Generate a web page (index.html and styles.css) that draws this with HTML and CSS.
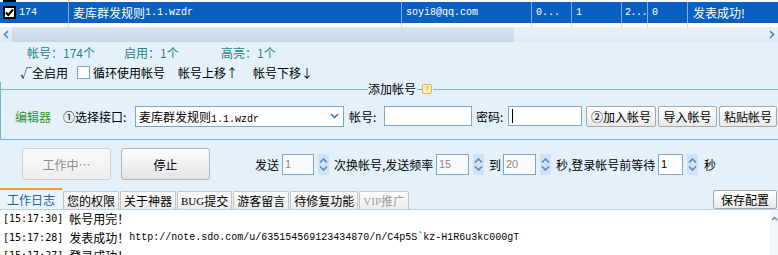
FILE: index.html
```html
<!DOCTYPE html>
<html lang="zh-CN">
<head>
    <meta charset="UTF-8">
    <meta name="viewport" content="width=device-width, initial-scale=1.0">
    <title>麦库群发</title>
    <link rel="stylesheet" href="styles.css">
</head>
<body>
    <div class="grid">
        <div class="grid-rows">
            <div class="row row-cut">
                <div class="cell c1"><span class="cut-mark"></span></div>
                <div class="cell c2"></div>
            </div>
            <div class="row selected">
                <div class="cell c1">
                    <svg class="grid-check" width="13" height="13" viewBox="0 0 13 13"><rect x="1" y="1" width="11" height="11" fill="#fff" stroke="#000" stroke-width="2"/><path d="M3 6.5l2.3 2.5 4.7-5.5" fill="none" stroke="#000" stroke-width="2"/></svg>
                    <span class="mono">174</span>
                </div>
                <div class="cell c2">麦库群发规则<span class="mono">1.1.wzdr</span></div>
                <div class="cell c3"><span class="mono">soyi8@qq.com</span></div>
                <div class="cell c4"><span class="mono">0...</span></div>
                <div class="cell c5"><span class="mono">1</span></div>
                <div class="cell c6"><span class="mono tight">2...</span></div>
                <div class="cell c7"><span class="mono">0</span></div>
                <div class="cell c8">发表成功!</div>
            </div>
            <div class="row">
                <div class="cell c1"></div>
                <div class="cell c2"></div>
                <div class="cell c3"></div>
                <div class="cell c4"></div>
                <div class="cell c5"></div>
                <div class="cell c6"></div>
                <div class="cell c7"></div>
                <div class="cell c8"></div>
            </div>
        </div>
        <div class="hscroll">
            <span class="hs-arrow"><svg width="6" height="9" viewBox="0 0 6 9"><path d="M5 1L1.5 4.5L5 8" stroke="#4a86c8" stroke-width="1.6" fill="none"/></svg></span>
            <div class="track"><div class="thumb"></div></div>
            <span class="hs-arrow"><svg width="6" height="9" viewBox="0 0 6 9"><path d="M1 1l3.5 3.5L1 8" stroke="#4a86c8" stroke-width="1.6" fill="none"/></svg></span>
        </div>
    </div>

    <div class="stats">
        <span>帐号：174个</span>
        <span>启用：1个</span>
        <span>高亮：1个</span>
    </div>

    <div class="options">
        <span class="check-all">√全启用</span>
        <span class="box"></span>
        <span>循环使用帐号</span>
        <span class="move-up">帐号上移↑</span>
        <span>帐号下移↓</span>
    </div>

    <div class="addbox">
        <div class="addbox-head">
            <span class="head-line left"></span>
            <span class="head-title">添加帐号</span>
            <span class="head-line dash"></span>
            <span class="help-icon">?</span>
            <span class="head-line right"></span>
        </div>
        <div class="addbox-body">
            <span class="editor">编辑器</span>
            <span class="lbl-api">①选择接口:</span>
            <div class="select">
                <span>麦库群发规则<span class="mono">1.1.wzdr</span></span>
                <svg width="9" height="6" viewBox="0 0 9 6"><path d="M1 1l3.5 3.5L8 1" stroke="#3a78c0" stroke-width="1.6" fill="none"/></svg>
            </div>
            <span class="lbl-acc">帐号:</span>
            <div class="input in-acc"></div>
            <span class="lbl-pwd">密码:</span>
            <div class="input in-pwd"><span class="caret"></span></div>
            <button class="btn-sm b-add">②加入帐号</button>
            <button class="btn-sm b-imp">导入帐号</button>
            <button class="btn-sm b-paste">粘贴帐号</button>
        </div>
    </div>

    <div class="runbar">
        <button class="btn-big disabled">工作中…</button>
        <button class="btn-big stop">停止</button>
        <span class="lbl-send">发送</span>
        <div class="num w32">1</div>
        <svg class="spin" width="11" height="21" viewBox="0 0 11 21"><rect width="11" height="21" fill="#d2e2f1"/><path d="M2 8.5l3.5-3.5L9 8.5" stroke="#4a86c8" stroke-width="1.5" fill="none"/><path d="M2 12.5l3.5 3.5L9 12.5" stroke="#4a86c8" stroke-width="1.5" fill="none"/></svg>
        <span class="lbl-long">次换帐号,发送频率</span>
        <div class="num w33">15</div>
        <svg class="spin" width="11" height="21" viewBox="0 0 11 21"><rect width="11" height="21" fill="#d2e2f1"/><path d="M2 8.5l3.5-3.5L9 8.5" stroke="#4a86c8" stroke-width="1.5" fill="none"/><path d="M2 12.5l3.5 3.5L9 12.5" stroke="#4a86c8" stroke-width="1.5" fill="none"/></svg>
        <span class="lbl-to">到</span>
        <div class="num w33">20</div>
        <svg class="spin" width="11" height="21" viewBox="0 0 11 21"><rect width="11" height="21" fill="#d2e2f1"/><path d="M2 8.5l3.5-3.5L9 8.5" stroke="#4a86c8" stroke-width="1.5" fill="none"/><path d="M2 12.5l3.5 3.5L9 12.5" stroke="#4a86c8" stroke-width="1.5" fill="none"/></svg>
        <span class="lbl-long">秒,登录帐号前等待</span>
        <div class="num w25 active">1</div>
        <svg class="spin" width="11" height="21" viewBox="0 0 11 21"><rect width="11" height="21" fill="#d2e2f1"/><path d="M2 8.5l3.5-3.5L9 8.5" stroke="#4a86c8" stroke-width="1.5" fill="none"/><path d="M2 12.5l3.5 3.5L9 12.5" stroke="#4a86c8" stroke-width="1.5" fill="none"/></svg>
        <span class="lbl-sec">秒</span>
    </div>

    <div class="tabbar">
        <span class="tab active">工作日志</span>
        <span class="tab">您的权限</span>
        <span class="tab">关于神器</span>
        <span class="tab"><span class="serif">BUG</span>提交</span>
        <span class="tab">游客留言</span>
        <span class="tab">待修复功能</span>
        <span class="tab vip"><span class="serif">VIP</span>推广</span>
        <button class="btn-sm save">保存配置</button>
    </div>

    <div class="log">
        <div class="log-lines">
            <div class="log-line"><span class="ts">[15:17:30] </span>帐号用完！</div>
            <div class="log-line"><span class="ts">[15:17:28] </span>发表成功！<span class="mono">http://note.sdo.com/u/635154569123434870/n/C4p5S`kz-H1R6u3kc000gT</span></div>
            <div class="log-line"><span class="ts">[15:17:27] </span>登录成功！</div>
        </div>
        <div class="vscroll">
            <svg width="7" height="5" viewBox="0 0 7 5"><path d="M1 4l2.5-2.5L6 4" stroke="#4a86c8" stroke-width="1.3" fill="none"/></svg>
        </div>
    </div>
</body>
</html>
```

FILE: styles.css
```css
* {
    box-sizing: border-box;
}
body {
    margin: 0;
    width: 778px;
    height: 255px;
    overflow: hidden;
    background-color: #e4f1fb;
    font-family: "Noto Sans CJK SC", sans-serif;
    font-size: 12px;
    color: #000;
}
button {
    font-family: inherit;
    font-size: 12px;
    color: #000;
    padding: 0;
}
.mono {
    font-family: "Liberation Mono", monospace;
    font-size: 10px;
}
.mono.tight {
    letter-spacing: -0.5px;
}
.serif {
    font-family: "Liberation Serif", serif;
    font-size: 11px;
}

/* account grid */
.grid {
    height: 42px;
    background-color: #fff;
}
.grid-rows {
    height: 27px;
    overflow: hidden;
}
.row {
    display: flex;
    height: 21px;
}
.row-cut {
    height: 2px;
}
.cut-mark {
    width: 13px;
    height: 2px;
    background-color: #000;
    align-self: flex-start;
}
.cell {
    display: flex;
    align-items: center;
    height: 100%;
    padding-left: 4px;
    border-right: 1px solid #d6d6d6;
    white-space: nowrap;
    overflow: hidden;
}
.selected {
    background-color: #0a5fc2;
    color: #fff;
}
.selected .cell {
    border-right-color: #86acdc;
}
.c1 { width: 69px; padding-left: 3px; }
.c2 { width: 333px; }
.c3 { width: 130px; }
.c4 { width: 40px; }
.c5 { width: 50px; }
.c6 { width: 26px; padding-left: 3px; }
.c7 { width: 40px; }
.c8 { flex: 1; border-right: none; padding-left: 5px; }
.grid-check {
    margin-right: 3px;
}
.hscroll {
    display: flex;
    align-items: center;
    height: 15px;
    background: linear-gradient(#eaf3fa, #dce9f4);
}
.hs-arrow {
    width: 12px;
    display: flex;
    justify-content: center;
}
.track {
    flex: 1;
    height: 100%;
}
.thumb {
    width: 502px;
    height: 100%;
    background: linear-gradient(#d6e5f1, #c4d7e7);
}

/* counters and options */
.stats {
    display: flex;
    height: 14px;
    line-height: 14px;
    margin-top: 4px;
    padding-left: 27px;
    color: #1f8585;
}
.stats span {
    width: 97px;
}
.options {
    display: flex;
    align-items: center;
    height: 16px;
    margin-top: 4px;
    padding-left: 20px;
}
.check-all {
    width: 57px;
}
.box {
    width: 13px;
    height: 13px;
    border: 1px solid #7aa7cf;
    background-color: #fff;
    margin-right: 3px;
}
.move-up {
    margin-left: 13px;
    width: 75px;
}

/* add account box */
.addbox {
    margin-top: 9px;
    border-left: 1px solid #78b5d3;
    border-bottom: 1px solid #78b5d3;
}
.addbox-head {
    display: flex;
    align-items: center;
    height: 14px;
    margin-top: -7px;
}
.head-line {
    height: 1px;
    background-color: #78b5d3;
}
.head-line.left {
    width: 367px;
}
.head-line.dash {
    width: 5px;
    margin-left: 1px;
}
.head-line.right {
    flex: 1;
    margin-left: 1px;
}
.head-title {
    line-height: 14px;
}
.help-icon {
    width: 10px;
    height: 10px;
    border: 1px solid #e0b050;
    border-radius: 2px;
    background-color: #fff3bd;
    color: #d08a20;
    font-family: "Liberation Sans", sans-serif;
    font-size: 8px;
    line-height: 8px;
    text-align: center;
}
.addbox-body {
    display: flex;
    align-items: center;
    height: 22px;
    margin: 9px 0 12px 14px;
}
.editor {
    width: 48px;
    color: #2a962a;
}
.lbl-api {
    width: 72px;
}
.select {
    display: flex;
    align-items: center;
    justify-content: space-between;
    width: 209px;
    height: 21px;
    padding: 0 4px 0 3px;
    border: 1px solid #7ea6c9;
    background-color: #fff;
}
.lbl-acc {
    width: 40px;
    padding-left: 5px;
}
.input {
    height: 20px;
    border: 1px solid #7ea6c9;
    background-color: #fff;
}
.in-acc {
    width: 88px;
}
.lbl-pwd {
    width: 36px;
    padding-left: 4px;
}
.in-pwd {
    width: 74px;
    display: flex;
    align-items: center;
    padding-left: 3px;
}
.caret {
    width: 1px;
    height: 14px;
    background-color: #000;
}
.btn-sm {
    height: 21px;
    border: 1px solid #a9a9a9;
    border-radius: 2px;
    background: linear-gradient(#ffffff, #e8e8e8);
}
.b-add { width: 70px; margin-left: 4px; }
.b-imp { width: 59px; margin-left: 2px; }
.b-paste { width: 58px; margin-left: 2px; }

/* run controls */
.runbar {
    display: flex;
    align-items: center;
    height: 32px;
    margin-top: 8px;
    padding-left: 22px;
}
.btn-big {
    width: 89px;
    height: 32px;
    border: 1px solid #b4b4b4;
    border-radius: 3px;
    background: linear-gradient(#fdfdfd, #e4e4e4);
}
.btn-big.disabled {
    color: #8c8c8c;
    border-color: #cfcfcf;
    background: linear-gradient(#fafafa, #eeeeee);
}
.btn-big.stop {
    margin-left: 10px;
}
.lbl-send {
    margin-left: 45px;
    width: 27px;
}
.num {
    height: 21px;
    padding-left: 2px;
    border: 1px solid #7ea6c9;
    background-color: #f7fafd;
    color: #8a8a8a;
    font-family: "Liberation Sans", sans-serif;
    font-size: 11px;
    line-height: 19px;
}
.num.active {
    background-color: #fff;
    color: #000;
}
.w32 { width: 32px; }
.w33 { width: 33px; }
.w25 { width: 25px; }
.spin {
    margin-left: 4px;
}
.lbl-long {
    width: 107px;
    padding-left: 5px;
}
.lbl-to {
    width: 19px;
    padding-left: 5px;
}
.lbl-sec {
    margin-left: 6px;
}

/* tabs */
.tabbar {
    display: flex;
    align-items: flex-end;
    height: 21px;
    margin-top: 8px;
}
.tab {
    display: flex;
    align-items: center;
    height: 18px;
    padding: 0 3px;
    margin-left: 1px;
    border: 1px solid #c4c4c4;
    border-bottom: none;
    border-radius: 2px 2px 0 0;
    background: linear-gradient(#fcfcfc, #ececec);
}
.tab.active {
    justify-content: center;
    width: 62px;
    height: 21px;
    margin-left: 0;
    border: none;
    border-top: 2px solid #f29b30;
    border-radius: 0;
    background: #eaf4fc;
    color: #1b62b8;
}
.tab.vip {
    color: #a0a0a0;
}
.btn-sm.save {
    width: 64px;
    height: 19px;
    margin-left: auto;
    margin-right: 1px;
    margin-bottom: 0;
}

/* log */
.log {
    display: flex;
    height: 46px;
    background-color: #fff;
    border-top: 1px solid #b9cfe1;
}
.log-lines {
    flex: 1;
    padding-left: 3px;
    white-space: nowrap;
    overflow: hidden;
}
.log-line {
    display: flex;
    align-items: center;
    height: 18.5px;
    line-height: 14px;
}
.ts {
    font-family: "DejaVu Sans Mono", monospace;
    font-size: 10px;
    white-space: pre;
}
.vscroll {
    width: 8px;
    padding-top: 6px;
    background-color: #f2f6fa;
    display: flex;
    justify-content: center;
    align-items: flex-start;
}
```
